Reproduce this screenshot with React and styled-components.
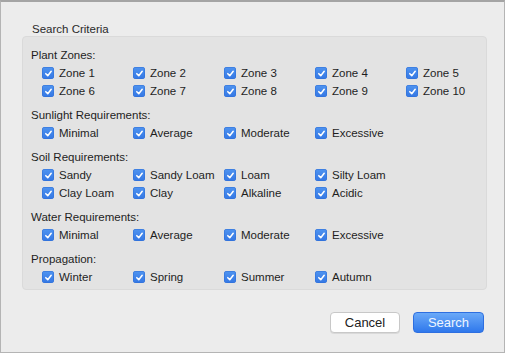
import React from "react";
import styled, { createGlobalStyle } from "styled-components";

const Global = createGlobalStyle`
  html, body { margin: 0; padding: 0; background: #ececec; }
  body { font-family: "Liberation Sans", Arial, sans-serif; }
`;

const Window = styled.div`
  box-sizing: border-box;
  width: 505px;
  height: 353px;
  background: #ececec;
  border-top: 2px solid #a4a4a4;
  border-left: 1px solid #b4b4b4;
  border-right: 1px solid #b4b4b4;
  border-bottom: 1px solid #b4b4b4;
  padding: 20px 20px 19px 21px;
  display: flex;
  flex-direction: column;
`;

const GroupTitle = styled.div`
  font-size: 11.5px;
  color: #2a2a2a;
  margin-left: 10px;
  line-height: 14px;
`;

const Group = styled.div`
  box-sizing: border-box;
  width: 465px;
  height: 254px;
  background: #e3e3e3;
  border: 1px solid #dadada;
  border-radius: 4px;
  padding: 10px 8px 4px 8px;
  display: flex;
  flex-direction: column;
  gap: 7px;
`;

const Section = styled.div`
  display: flex;
  flex-direction: column;
`;

const SectionLabel = styled.div`
  font-size: 11.5px;
  line-height: 17px;
  color: #1e1e1e;
`;

const Grid = styled.div`
  display: grid;
  grid-template-columns: repeat(${(p) => p.$cols}, 91px);
  grid-auto-rows: 18px;
  padding-left: 11px;
`;

const Item = styled.label`
  display: flex;
  align-items: center;
  gap: 5px;
  font-size: 11.5px;
  color: #1e1e1e;
  white-space: nowrap;
`;

const Box = styled.span`
  width: 12px;
  height: 12px;
  border-radius: 3px;
  background: linear-gradient(#4f94f0, #3477e4);
  box-shadow: inset 0 0 0 0.5px #2f6fd6;
  display: flex;
  align-items: center;
  justify-content: center;
  flex: none;
`;

const Footer = styled.div`
  margin-top: auto;
  display: flex;
  justify-content: flex-end;
  gap: 13px;
`;

const Button = styled.button`
  box-sizing: border-box;
  width: ${(p) => p.$w}px;
  height: 21px;
  border-radius: 4px;
  font-family: "Liberation Sans", Arial, sans-serif;
  font-size: 13px;
  padding: 0;
  ${(p) =>
    p.$primary
      ? `background: linear-gradient(#6aa9f8, #2f78ec);
         color: #eef5ff;
         border: 1px solid #2e6fe0;`
      : `background: #ffffff;
         color: #222;
         border: 1px solid #c8c8c8;
         box-shadow: 0 1px 0 rgba(0,0,0,0.08);`}
`;

const Check = () => (
  <Box>
    <svg width="9" height="9" viewBox="0 0 10 10">
      <path d="M2 5.2 L4.2 7.4 L8 2.6" fill="none" stroke="#fff" strokeWidth="1.7" strokeLinecap="round" strokeLinejoin="round" />
    </svg>
  </Box>
);

const sections = [
  { label: "Plant Zones:", items: ["Zone 1", "Zone 2", "Zone 3", "Zone 4", "Zone 5", "Zone 6", "Zone 7", "Zone 8", "Zone 9", "Zone 10"], cols: 5 },
  { label: "Sunlight Requirements:", items: ["Minimal", "Average", "Moderate", "Excessive"] },
  { label: "Soil Requirements:", items: ["Sandy", "Sandy Loam", "Loam", "Silty Loam", "Clay Loam", "Clay", "Alkaline", "Acidic"], cols: 4 },
  { label: "Water Requirements:", items: ["Minimal", "Average", "Moderate", "Excessive"] },
  { label: "Propagation:", items: ["Winter", "Spring", "Summer", "Autumn"] },
];

export default function App() {
  return (
    <>
      <Global />
      <Window>
        <GroupTitle>Search Criteria</GroupTitle>
        <Group>
          {sections.map((s) => (
            <Section key={s.label}>
              <SectionLabel>{s.label}</SectionLabel>
              <Grid $cols={s.cols || 5}>
                {s.items.map((it) => (
                  <Item key={it}>
                    <Check />
                    {it}
                  </Item>
                ))}
              </Grid>
            </Section>
          ))}
        </Group>
        <Footer>
          <Button $w={70}>Cancel</Button>
          <Button $w={71} $primary>Search</Button>
        </Footer>
      </Window>
    </>
  );
}
